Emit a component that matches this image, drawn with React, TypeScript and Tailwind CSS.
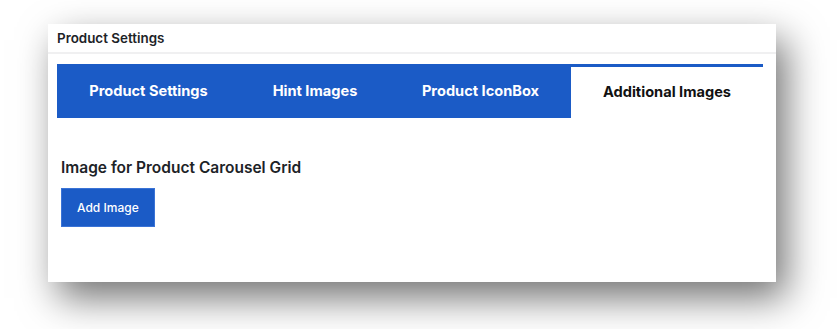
export default function App() {
  const tabs = [
    { t: "Product Settings", w: "w-[183px]" },
    { t: "Hint Images", w: "w-[150px]" },
    { t: "Product IconBox", w: "w-[181px]" },
  ];
  return (
    <div className="w-[837px] h-[329px] bg-white pt-[24px] pl-[48px]" style={{ fontFamily: "Inter, 'Liberation Sans', sans-serif" }}>
      <div className="w-[728px] h-[258px] bg-white shadow-[10px_16px_36px_rgba(0,0,0,0.55)] flex flex-col">
        <div className="h-[30px] border-b-2 border-[#f0f0f1] pl-[9px] flex items-center text-[13.4px] font-semibold text-[#1d2327]">
          Product Settings
        </div>
        <div className="flex ml-[9px] mt-[10px]">
          {tabs.map(({ t, w }) => (
            <div key={t} className={`${w} h-[54px] pt-[2px] bg-[#1b5bc6] text-white text-[14.6px] font-bold flex items-center justify-center`}>
              {t}
            </div>
          ))}
          <div className="h-[54px] flex-1 mr-[13px] border-t-[3px] border-[#1b5bc6] bg-white text-[#111] text-[14.6px] font-bold flex items-center justify-center">
            Additional Images
          </div>
        </div>
        <div className="pl-[13px] pt-[40px]">
          <div className="text-[15.5px] font-semibold text-[#1d2327] leading-[20px]">Image for Product Carousel Grid</div>
          <button className="mt-[10px] h-[39px] px-[15px] bg-[#1b5bc6] border border-[#3a73d6] text-white text-[12px] font-medium">
            Add Image
          </button>
        </div>
      </div>
    </div>
  );
}
